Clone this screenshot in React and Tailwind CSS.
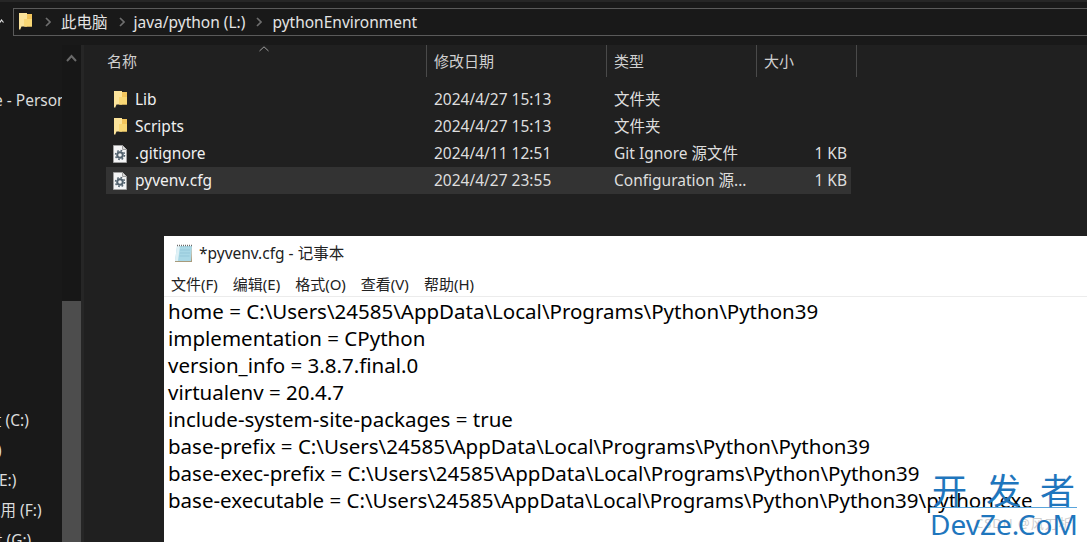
const UI_FONT = "font-['Noto_Sans','Noto_Sans_CJK_SC',sans-serif]"

const files = [
  { name: 'Lib', date: '2024/4/27 15:13', type: '文件夹', size: '', icon: 'folder' },
  { name: 'Scripts', date: '2024/4/27 15:13', type: '文件夹', size: '', icon: 'folder' },
  { name: '.gitignore', date: '2024/4/11 12:51', type: 'Git Ignore 源文件', size: '1 KB', icon: 'file' },
  { name: 'pyvenv.cfg', date: '2024/4/27 23:55', type: 'Configuration 源...', size: '1 KB', icon: 'file', selected: true },
]

const lines = [
  'home = C:\\Users\\24585\\AppData\\Local\\Programs\\Python\\Python39',
  'implementation = CPython',
  'version_info = 3.8.7.final.0',
  'virtualenv = 20.4.7',
  'include-system-site-packages = true',
  'base-prefix = C:\\Users\\24585\\AppData\\Local\\Programs\\Python\\Python39',
  'base-exec-prefix = C:\\Users\\24585\\AppData\\Local\\Programs\\Python\\Python39',
  'base-executable = C:\\Users\\24585\\AppData\\Local\\Programs\\Python\\Python39\\python.exe',
]

const drives = [
  { label: '盘 (C:)', cls: '-ml-[14px]' },
  { label: ')', cls: '-ml-[3px]' },
  { label: 'E:)', cls: '-ml-[1px]' },
  { label: '应用 (F:)', cls: '-ml-[15px]' },
  { label: '盘 (G:)', cls: '-ml-[13px]' },
]

function FolderIcon() {
  return (
    <svg width="13" height="17" viewBox="0 0 13 17">
      <path d="M6 1h7v12.500H6z" fill="#f2c55c" />
      <path d="M0 0h8v13.500H2.500L1 17l-1-1z" fill="#fbe39a" />
      <path d="M5 6h8v7.500H5z" fill="#f8d775" />
    </svg>
  )
}

function FileIcon() {
  return (
    <svg width="14" height="18" viewBox="0 0 14 18">
      <path d="M0.500 0.500h9l4 4v13h-13z" fill="#f4f5f6" stroke="#a0a0a0" />
      <path d="M9.500 0.500v4h4" fill="#d8d8d8" stroke="#a0a0a0" />
      <circle cx="7" cy="10" r="2.800" fill="none" stroke="#52626e" strokeWidth="2" />
      <circle cx="7" cy="10" r="4.500" fill="none" stroke="#52626e" strokeWidth="1.500" strokeDasharray="1.700 1.830" />
    </svg>
  )
}

function Chevron() {
  return (
    <svg width="6" height="10" viewBox="0 0 6 10" className="shrink-0">
      <path d="M1 1l4 4-4 4" fill="none" stroke="#6e6e6e" strokeWidth="1.700" />
    </svg>
  )
}

function NotepadIcon() {
  return (
    <svg width="20" height="20" viewBox="0 0 20 20">
      <path d="M3 2h15l-1 15H1z" fill="#a9d8e6" />
      <path d="M3 2h3L4 17H1z" fill="#dff1f6" />
      <path d="M1 17h16l1-15v16H1z" fill="#a89b7c" />
      <path d="M3 1.500h15" stroke="#6b6b6b" strokeWidth="1.500" strokeDasharray="1 1" />
      <path d="M6 6h10M6 9h10M5.500 12h10" stroke="#8cc2d3" strokeWidth="0.700" />
    </svg>
  )
}

function FileRow({ file }) {
  return (
    <div className={`flex h-[27px] w-[745px] items-center text-[15.5px] text-[#dedede] ${file.selected ? 'bg-[#333333]' : ''}`}>
      <div className="flex w-[320px] items-center pl-[7px]">
        <div className="flex w-[14px] justify-center">
          {file.icon === 'folder' ? <FolderIcon /> : <FileIcon />}
        </div>
        <span className="ml-[8px] text-[#f0f0f0]">{file.name}</span>
      </div>
      <div className="w-[188px] pl-[8px]">{file.date}</div>
      <div className="w-[150px] whitespace-nowrap">{file.type}</div>
      <div className="w-[87px] pr-[4px] text-right">{file.size}</div>
    </div>
  )
}

export default function App() {
  return (
    <div className={`relative h-[542px] w-[1087px] overflow-hidden bg-[#202020] ${UI_FONT}`}>
      {/* address bar */}
      <div className="relative flex h-[45px] items-start border-t-2 border-[#262626] bg-[#191919] pl-[13px] pt-[6px]">
        <svg width="4" height="6" viewBox="0 0 4 6" className="absolute left-0 top-[16px]">
          <path d="M0 4.500L1.500 2 3.500 4.500" fill="none" stroke="#e0e0e0" strokeWidth="1.200" />
        </svg>
        <div className="flex h-[28px] flex-1 items-center border border-r-0 border-[#5a5a5a] pb-[1px] pl-[5px] text-[15.5px] leading-[24px] text-[#e4e4e4]">
          <FolderIcon />
          <div className="ml-[13px]"><Chevron /></div>
          <span className="ml-[10px]">此电脑</span>
          <div className="ml-[11px]"><Chevron /></div>
          <span className="ml-[9px]">java/python (L:)</span>
          <div className="ml-[11px]"><Chevron /></div>
          <span className="ml-[10px]">pythonEnvironment</span>
        </div>
      </div>

      <div className="flex h-[497px]">
        {/* nav pane */}
        <div className="relative w-[62px] overflow-hidden bg-[#191919] text-[15.5px] leading-[21px] text-[#dcdcdc]">
          <div className="-ml-[6px] mt-[45px] whitespace-nowrap">e - Personal</div>
          <div className="mt-[299px] flex flex-col gap-[9px] whitespace-nowrap">
            {drives.map((d) => (
              <div key={d.label} className={`h-[21px] ${d.cls}`}>{d.label}</div>
            ))}
          </div>
        </div>
        {/* scrollbar */}
        <div className="w-[19px] bg-[#171717] pt-[9px]">
          <svg width="19" height="8" viewBox="0 0 19 8">
            <path d="M5 7l4.500-5 4.500 5" fill="none" stroke="#6a6a6a" strokeWidth="2" />
          </svg>
          <div className="mt-[239px] h-[241px] w-[19px] bg-[#4d4d4d]" />
        </div>
        <div className="w-[3px] bg-[#262626]" />

        {/* file list */}
        <div className="relative flex-1 bg-[#202020]">
          <svg width="10" height="6" viewBox="0 0 10 6" className="absolute left-[175px] top-[1px]">
            <path d="M0.500 5L5 0.800 9.500 5" fill="none" stroke="#a0a0a0" />
          </svg>
          <div className="flex h-[32px] text-[15px] leading-[22px] text-[#d0d0d0]">
            <div className="w-[343px] border-r border-[#4a4a4a] pl-[23px] pt-[5px]">名称</div>
            <div className="w-[180px] border-r border-[#4a4a4a] pl-[7px] pt-[5px]">修改日期</div>
            <div className="w-[150px] border-r border-[#4a4a4a] pl-[7px] pt-[5px]">类型</div>
            <div className="w-[100px] border-r border-[#4a4a4a] pl-[7px] pt-[5px]">大小</div>
          </div>
          <div className="ml-[22px] mt-[9px]">
            {files.map((f) => (
              <FileRow key={f.name} file={f} />
            ))}
          </div>
        </div>
      </div>

      {/* notepad window */}
      <div className="absolute left-[164px] top-[236px] h-[306px] w-[923px] bg-white">
        <div className="flex h-[36px] items-center pl-[10px] text-[15.5px] text-[#222222]">
          <NotepadIcon />
          <span className="ml-[5px]">*pyvenv.cfg - 记事本</span>
        </div>
        <div className="flex h-[25px] items-center gap-[15px] border-b border-[#ececec] pl-[7px] text-[15px] text-[#222222]">
          <span>文件(F)</span>
          <span>编辑(E)</span>
          <span>格式(O)</span>
          <span>查看(V)</span>
          <span>帮助(H)</span>
        </div>
        <div className="pl-[4px] pt-[1px] text-[20.500px] leading-[27px] text-black">
          {lines.map((l) => (
            <div key={l} className="whitespace-nowrap">{l}</div>
          ))}
        </div>
      </div>

      {/* watermark */}
      <div className="absolute left-[975px] top-[514px] whitespace-nowrap text-[13px] tracking-[1px] text-[#cfcfcf]">CSDN @风刀析</div>
      <div className="absolute left-[930px] top-[473px] w-[147px] text-[#1f76bd]">
        <div className="flex h-[35px] justify-between border-b border-[#5aa5dc] px-[2px] text-[35px] leading-[35px]">
          <span>开</span>
          <span>发</span>
          <span>者</span>
        </div>
        <div className="whitespace-nowrap text-[28px] leading-[32px]">DevZe.CoM</div>
      </div>
    </div>
  )
}
